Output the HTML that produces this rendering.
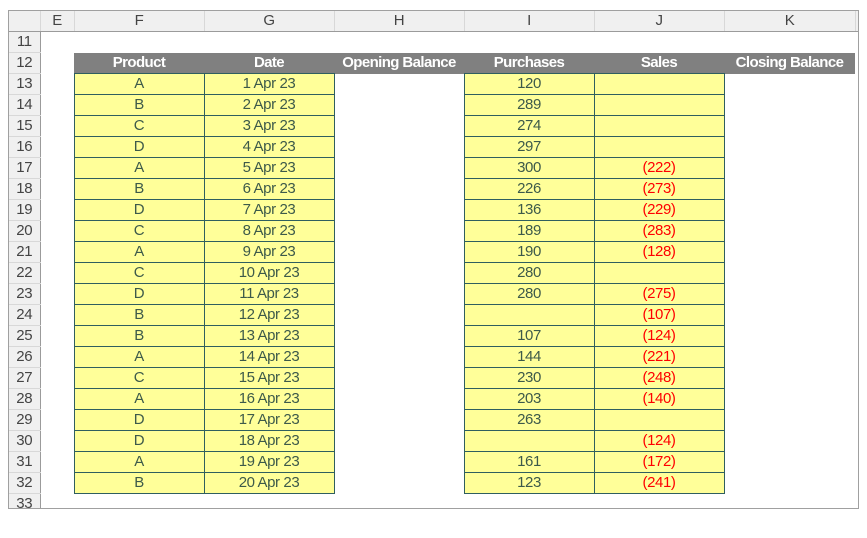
<!DOCTYPE html>
<html><head><meta charset="utf-8"><style>
body{margin:0;width:867px;height:538px;background:#fff;overflow:hidden;font-family:"Liberation Sans",Arial,sans-serif;}
#w{position:absolute;left:8px;top:10px;width:849px;height:497px;border:1px solid #a0a0a0;overflow:hidden;background:#fff}
table{border-collapse:collapse;table-layout:fixed;position:absolute;left:0;top:0;width:867px}
td{height:20px;padding:0;text-align:center;font-size:15px;line-height:20px;white-space:nowrap;overflow:visible;color:#3d5a4a;letter-spacing:-0.4px}
tr.ch td{background:#f0f0f0;border-right:1px solid #d8d8d8;border-bottom:1px solid #9b9b9b;color:#444;font-size:15px}
td.rn{background:#f0f0f0;border-right:1px solid #9b9b9b;border-bottom:1px solid #d8d8d8;color:#444;font-size:15px;text-align:center}
td.y{background:#ffff99;border:1px solid #2f5f5f}
td.h{background:#808080;color:#fff;font-weight:bold;font-size:15px;letter-spacing:-0.6px}
td.r{color:#ff0000}
</style></head><body><div id="w"><table>
<colgroup><col style="width:31px"><col style="width:34px"><col style="width:130px"><col style="width:130px"><col style="width:130px"><col style="width:130px"><col style="width:130px"><col style="width:131px"><col style="width:21px"></colgroup>
<tr class="ch"><td></td><td>E</td><td>F</td><td>G</td><td>H</td><td>I</td><td>J</td><td>K</td><td></td></tr>
<tr><td class="rn">11</td><td></td><td></td><td></td><td></td><td></td><td></td><td></td><td></td></tr>
<tr><td class="rn">12</td><td></td><td class="h">Product</td><td class="h">Date</td><td class="h">Opening Balance</td><td class="h">Purchases</td><td class="h">Sales</td><td class="h">Closing Balance</td><td></td></tr>
<tr><td class="rn">13</td><td></td><td class="y">A</td><td class="y">1 Apr 23</td><td></td><td class="y">120</td><td class="y"></td><td></td><td></td></tr>
<tr><td class="rn">14</td><td></td><td class="y">B</td><td class="y">2 Apr 23</td><td></td><td class="y">289</td><td class="y"></td><td></td><td></td></tr>
<tr><td class="rn">15</td><td></td><td class="y">C</td><td class="y">3 Apr 23</td><td></td><td class="y">274</td><td class="y"></td><td></td><td></td></tr>
<tr><td class="rn">16</td><td></td><td class="y">D</td><td class="y">4 Apr 23</td><td></td><td class="y">297</td><td class="y"></td><td></td><td></td></tr>
<tr><td class="rn">17</td><td></td><td class="y">A</td><td class="y">5 Apr 23</td><td></td><td class="y">300</td><td class="y r">(222)</td><td></td><td></td></tr>
<tr><td class="rn">18</td><td></td><td class="y">B</td><td class="y">6 Apr 23</td><td></td><td class="y">226</td><td class="y r">(273)</td><td></td><td></td></tr>
<tr><td class="rn">19</td><td></td><td class="y">D</td><td class="y">7 Apr 23</td><td></td><td class="y">136</td><td class="y r">(229)</td><td></td><td></td></tr>
<tr><td class="rn">20</td><td></td><td class="y">C</td><td class="y">8 Apr 23</td><td></td><td class="y">189</td><td class="y r">(283)</td><td></td><td></td></tr>
<tr><td class="rn">21</td><td></td><td class="y">A</td><td class="y">9 Apr 23</td><td></td><td class="y">190</td><td class="y r">(128)</td><td></td><td></td></tr>
<tr><td class="rn">22</td><td></td><td class="y">C</td><td class="y">10 Apr 23</td><td></td><td class="y">280</td><td class="y"></td><td></td><td></td></tr>
<tr><td class="rn">23</td><td></td><td class="y">D</td><td class="y">11 Apr 23</td><td></td><td class="y">280</td><td class="y r">(275)</td><td></td><td></td></tr>
<tr><td class="rn">24</td><td></td><td class="y">B</td><td class="y">12 Apr 23</td><td></td><td class="y"></td><td class="y r">(107)</td><td></td><td></td></tr>
<tr><td class="rn">25</td><td></td><td class="y">B</td><td class="y">13 Apr 23</td><td></td><td class="y">107</td><td class="y r">(124)</td><td></td><td></td></tr>
<tr><td class="rn">26</td><td></td><td class="y">A</td><td class="y">14 Apr 23</td><td></td><td class="y">144</td><td class="y r">(221)</td><td></td><td></td></tr>
<tr><td class="rn">27</td><td></td><td class="y">C</td><td class="y">15 Apr 23</td><td></td><td class="y">230</td><td class="y r">(248)</td><td></td><td></td></tr>
<tr><td class="rn">28</td><td></td><td class="y">A</td><td class="y">16 Apr 23</td><td></td><td class="y">203</td><td class="y r">(140)</td><td></td><td></td></tr>
<tr><td class="rn">29</td><td></td><td class="y">D</td><td class="y">17 Apr 23</td><td></td><td class="y">263</td><td class="y"></td><td></td><td></td></tr>
<tr><td class="rn">30</td><td></td><td class="y">D</td><td class="y">18 Apr 23</td><td></td><td class="y"></td><td class="y r">(124)</td><td></td><td></td></tr>
<tr><td class="rn">31</td><td></td><td class="y">A</td><td class="y">19 Apr 23</td><td></td><td class="y">161</td><td class="y r">(172)</td><td></td><td></td></tr>
<tr><td class="rn">32</td><td></td><td class="y">B</td><td class="y">20 Apr 23</td><td></td><td class="y">123</td><td class="y r">(241)</td><td></td><td></td></tr>
<tr><td class="rn">33</td><td></td><td></td><td></td><td></td><td></td><td></td><td></td><td></td></tr>
</table></div></body></html>
